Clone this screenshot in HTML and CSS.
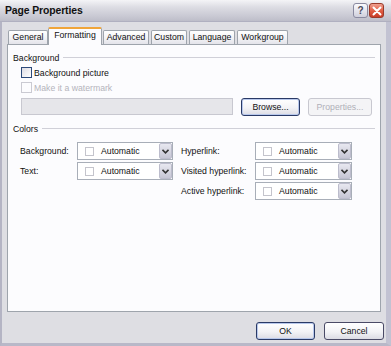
FILE: index.html
```html
<!DOCTYPE html>
<html>
<head>
<meta charset="utf-8">
<link rel="stylesheet" href="styles.css">
</head>
<body>
<div class="window">
  <div class="titlebar">
    <span class="title">Page Properties</span>
    <div class="tbtns">
      <span class="tb help">?</span>
      <span class="tb close"><svg width="10" height="10" viewBox="0 0 10 10"><path d="M1.5 1.5 L8.5 8.5 M8.5 1.5 L1.5 8.5" stroke="#fff" stroke-width="2" stroke-linecap="round"/></svg></span>
    </div>
  </div>
  <div class="client">
    <div class="tabs">
      <span class="tab first">General</span>
      <span class="tab active">Formatting</span>
      <span class="tab">Advanced</span>
      <span class="tab">Custom</span>
      <span class="tab">Language</span>
      <span class="tab">Workgroup</span>
    </div>
    <div class="panel">
      <div class="group-head"><span>Background</span><i class="rule"></i></div>
      <div class="check"><span class="box"></span><span>Background picture</span></div>
      <div class="check disabled"><span class="box"></span><span>Make it a watermark</span></div>
      <div class="file-row">
        <div class="textbox"></div>
        <span class="btn browse">Browse...</span>
        <span class="btn props disabled">Properties...</span>
      </div>
      <div class="group-head colors-head"><span>Colors</span><i class="rule"></i></div>
      <div class="colors">
        <span class="lbl">Background:</span>
        <div class="combo"><span class="swatch"></span><span class="val">Automatic</span><span class="drop"><svg width="7" height="5" viewBox="0 0 7 5"><path d="M0.5 0.8 L3.5 3.8 L6.5 0.8" fill="none" stroke="#333" stroke-width="1.6"/></svg></span></div>
        <span class="lbl lbl2">Hyperlink:</span>
        <div class="combo"><span class="swatch"></span><span class="val">Automatic</span><span class="drop"><svg width="7" height="5" viewBox="0 0 7 5"><path d="M0.5 0.8 L3.5 3.8 L6.5 0.8" fill="none" stroke="#333" stroke-width="1.6"/></svg></span></div>

        <span class="lbl">Text:</span>
        <div class="combo"><span class="swatch"></span><span class="val">Automatic</span><span class="drop"><svg width="7" height="5" viewBox="0 0 7 5"><path d="M0.5 0.8 L3.5 3.8 L6.5 0.8" fill="none" stroke="#333" stroke-width="1.6"/></svg></span></div>
        <span class="lbl lbl2">Visited hyperlink:</span>
        <div class="combo"><span class="swatch"></span><span class="val">Automatic</span><span class="drop"><svg width="7" height="5" viewBox="0 0 7 5"><path d="M0.5 0.8 L3.5 3.8 L6.5 0.8" fill="none" stroke="#333" stroke-width="1.6"/></svg></span></div>

        <span class="lbl"></span>
        <span></span>
        <span class="lbl lbl2">Active hyperlink:</span>
        <div class="combo"><span class="swatch"></span><span class="val">Automatic</span><span class="drop"><svg width="7" height="5" viewBox="0 0 7 5"><path d="M0.5 0.8 L3.5 3.8 L6.5 0.8" fill="none" stroke="#333" stroke-width="1.6"/></svg></span></div>
      </div>
    </div>
    <div class="footer">
      <span class="btn ok">OK</span>
      <span class="btn cancel">Cancel</span>
    </div>
  </div>
</div>
</body>
</html>
```

FILE: styles.css
```css
* { box-sizing: border-box; }
html, body { margin: 0; padding: 0; background: #ffffff; }
body {
  font-family: "Liberation Sans", Arial, sans-serif;
  font-size: 8.7px;
  color: #111;
}
.window {
  width: 391px;
  height: 346px;
  background: #dedee3;
  border-left: 2px solid #b4b4c4;
  border-right: 5px solid #c2c2d2;
  border-bottom: 3px solid #b8b8c8;
  display: flex;
  flex-direction: column;
}
.titlebar {
  height: 22px;
  flex: none;
  display: flex;
  align-items: center;
  justify-content: space-between;
  padding: 0 3px 0 3px;
  margin: 0 -5px 0 -2px;
  padding-left: 5px;
  background: linear-gradient(#f4f4f7 0%, #dcdce3 35%, #cacad4 75%, #bdbdc9 100%);
  border-bottom: 1px solid #b0b0c0;
}
.title {
  font-weight: bold;
  font-size: 10.4px;
  color: #111;
  letter-spacing: -0.1px;
}
.tbtns { display: flex; gap: 1px; margin-right: 4px; }
.tb {
  width: 15px;
  height: 15px;
  border-radius: 3px;
  display: flex;
  align-items: center;
  justify-content: center;
}
.help {
  border: 1px solid #8a8aa0;
  background: linear-gradient(#fafafe, #d0d0dc);
  color: #4a4a5a;
  font-weight: bold;
  font-size: 10px;
}
.close {
  border: 1px solid #9a3a2a;
  background: linear-gradient(#f0a090, #e05a40 55%, #c83c28);
}
.client {
  flex: 1;
  display: flex;
  flex-direction: column;
  padding: 0 0 0 5px;
}
.tabs {
  height: 22px;
  display: flex;
  align-items: flex-end;
  padding-left: 1px;
  gap: 2px;
  position: relative;
  z-index: 1;
}
.tab {
  height: 14px;
  padding: 0 4px;
  border: 1px solid #9ea4ac;
  border-bottom: none;
  border-radius: 2px 2px 0 0;
  background: linear-gradient(#ffffff, #f1f1f4 60%, #e4e4ea);
  display: flex;
  align-items: center;
  justify-content: center;
  line-height: 1;
  margin-bottom: 0;
}
.tab.first { width: 40px; }
.tab.active {
  height: 18px;
  width: 54px;
  margin: 0 -2px -1px -2px;
  background: #fcfcfe;
  border-top: 2px solid #f0a53a;
  padding-bottom: 3px;
}
.tab:nth-child(3) { width: 46px; margin-left: 1px; }
.tab:nth-child(4) { width: 36px; }
.tab:nth-child(5) { width: 46px; }
.tab:nth-child(6) { width: 51px; }
.panel {
  width: 374px;
  height: 268px;
  border: 1px solid #9ea4ac;
  background: #fcfcfe;
  padding: 7px 5px 0 5px;
  display: flex;
  flex-direction: column;
}
.group-head {
  height: 11px;
  display: flex;
  align-items: center;
  gap: 4px;
}
.rule {
  flex: 1;
  height: 1px;
  background: #d0d0d8;
  margin-top: 0;
}
.check {
  height: 13px;
  display: flex;
  align-items: center;
  margin-top: 3px;
  padding-left: 8px;
}
.check + .check { margin-top: 2px; }
.box {
  width: 11px;
  height: 11px;
  border: 1px solid #2c4a7a;
  background: linear-gradient(135deg, #dcdce4, #ffffff);
  margin-right: 2px;
}
.check.disabled { color: #b4b4bc; }
.check.disabled .box { border-color: #cacad2; background: #fcfcfe; }
.file-row {
  margin-top: 4px;
  padding-left: 8px;
  display: flex;
  align-items: flex-start;
  height: 18px;
}
.textbox {
  width: 212px;
  height: 17px;
  border: 1px solid #c8c8d0;
  background: #e6e6ea;
}
.btn {
  height: 18px;
  border: 1px solid #4a4a66;
  border-radius: 3px;
  background: linear-gradient(#ffffff, #f3f3f6 55%, #dcdce4);
  display: flex;
  align-items: center;
  justify-content: center;
  color: #111;
}
.browse {
  width: 59px;
  margin-left: 8px;
  border-color: #2a3a66;
  box-shadow: inset 0 0 0 1px #b8c8ec;
}
.props {
  width: 64px;
  margin-left: 8px;
}
.btn.disabled {
  border-color: #c8c8d0;
  background: #f4f4f6;
  color: #b0b0b8;
  box-shadow: none;
}
.colors-head { margin-top: 7px; }
.colors {
  margin-top: 8px;
  padding-left: 7px;
  display: grid;
  grid-template-columns: 57px 96px 82px 97px;
  grid-auto-rows: 18px;
  row-gap: 2px;
}
.lbl {
  display: flex;
  align-items: center;
}
.lbl2 { padding-left: 8px; }
.combo {
  border: 1px solid #a8aeb8;
  background: #ffffff;
  display: flex;
  align-items: center;
  padding-left: 7px;
  position: relative;
}
.swatch {
  width: 9px;
  height: 9px;
  border: 1px solid #c4c4cc;
  background: #fff;
}
.val { margin-left: 7px; flex: 1; }
.drop {
  width: 13px;
  height: 16px;
  margin-right: 0;
  border: 1px solid #bcbccc;
  border-radius: 2px;
  background: linear-gradient(#e8e8f0, #c6c6d4);
  display: flex;
  align-items: center;
  justify-content: center;
}
.footer {
  display: flex;
  justify-content: flex-end;
  gap: 9px;
  padding: 10px 2px 0 0;
}
.ok {
  width: 59px;
  border-color: #2a3a66;
  box-shadow: inset 0 0 0 1px #b8c8ec;
}
.cancel { width: 60px; }
```
